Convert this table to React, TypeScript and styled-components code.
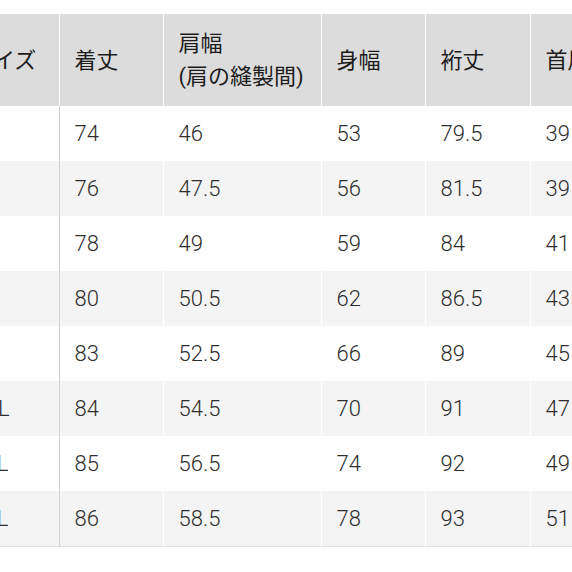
import styled, { createGlobalStyle } from "styled-components";

const GlobalStyle = createGlobalStyle`
  html, body {
    margin: 0;
    padding: 0;
    background: #ffffff;
  }
  body {
    font-family: Roboto, "Noto Sans CJK JP", sans-serif;
  }
`;

interface SizeRow {
  size: string;
  values: string[];
}

const headers = ["サイズ", "着丈", "肩幅\n(肩の縫製間)", "身幅", "裄丈", "首周り", "袖丈"];
const widths = [103, 104, 158, 104, 105, 105, 105];

const rows: SizeRow[] = [
  { size: "XS", values: ["74", "46", "53", "79.5", "39", "60"] },
  { size: "S", values: ["76", "47.5", "56", "81.5", "39", "61"] },
  { size: "M", values: ["78", "49", "59", "84", "41", "62"] },
  { size: "L", values: ["80", "50.5", "62", "86.5", "43", "63"] },
  { size: "XL", values: ["83", "52.5", "66", "89", "45", "64"] },
  { size: "XXL", values: ["84", "54.5", "70", "91", "47", "65"] },
  { size: "3XL", values: ["85", "56.5", "74", "92", "49", "66"] },
  { size: "4XL", values: ["86", "58.5", "78", "93", "51", "67"] },
];

const Page = styled.div`
  width: 572px;
  height: 572px;
  overflow: hidden;
  padding-top: 14px;
  box-sizing: border-box;
`;

const Table = styled.table`
  margin-left: -44px;
  border-collapse: collapse;
  table-layout: fixed;
  width: ${widths.reduce((a, b) => a + b, 0)}px;
  font-size: 22px;
  line-height: 33px;
  border-bottom: 1px solid #dedede;
`;

const HeadCell = styled.th`
  background: #dcdcdc;
  color: #1c1c1c;
  font-weight: 400;
  text-align: left;
  vertical-align: middle;
  padding: 13px 15px;
  height: 66px;
  border-left: 1px solid #ffffff;
  white-space: pre-line;
  &:first-child {
    border-left: none;
  }
`;

const BodyRow = styled.tr<{ $striped: boolean }>`
  background: ${(p) => (p.$striped ? "#f4f4f4" : "#ffffff")};
`;

const Cell = styled.td<{ $first?: boolean }>`
  color: #2e2e2e;
  font-weight: 300;
  padding: 11px 15px;
  height: 33px;
  vertical-align: middle;
  border-left: 1px solid #ffffff;
  border-right: ${(p) => (p.$first ? "1px solid #d2d2d2" : "none")};
  &:first-child {
    border-left: none;
  }
`;

export default function App() {
  return (
    <>
      <GlobalStyle />
      <Page>
        <Table>
          <colgroup>
            {widths.map((w, i) => (
              <col key={i} style={{ width: w }} />
            ))}
          </colgroup>
          <thead>
            <tr>
              {headers.map((h) => (
                <HeadCell key={h}>{h}</HeadCell>
              ))}
            </tr>
          </thead>
          <tbody>
            {rows.map((row, i) => (
              <BodyRow key={row.size} $striped={i % 2 === 1}>
                <Cell $first>{row.size}</Cell>
                {row.values.map((v, j) => (
                  <Cell key={j}>{v}</Cell>
                ))}
              </BodyRow>
            ))}
          </tbody>
        </Table>
      </Page>
    </>
  );
}
